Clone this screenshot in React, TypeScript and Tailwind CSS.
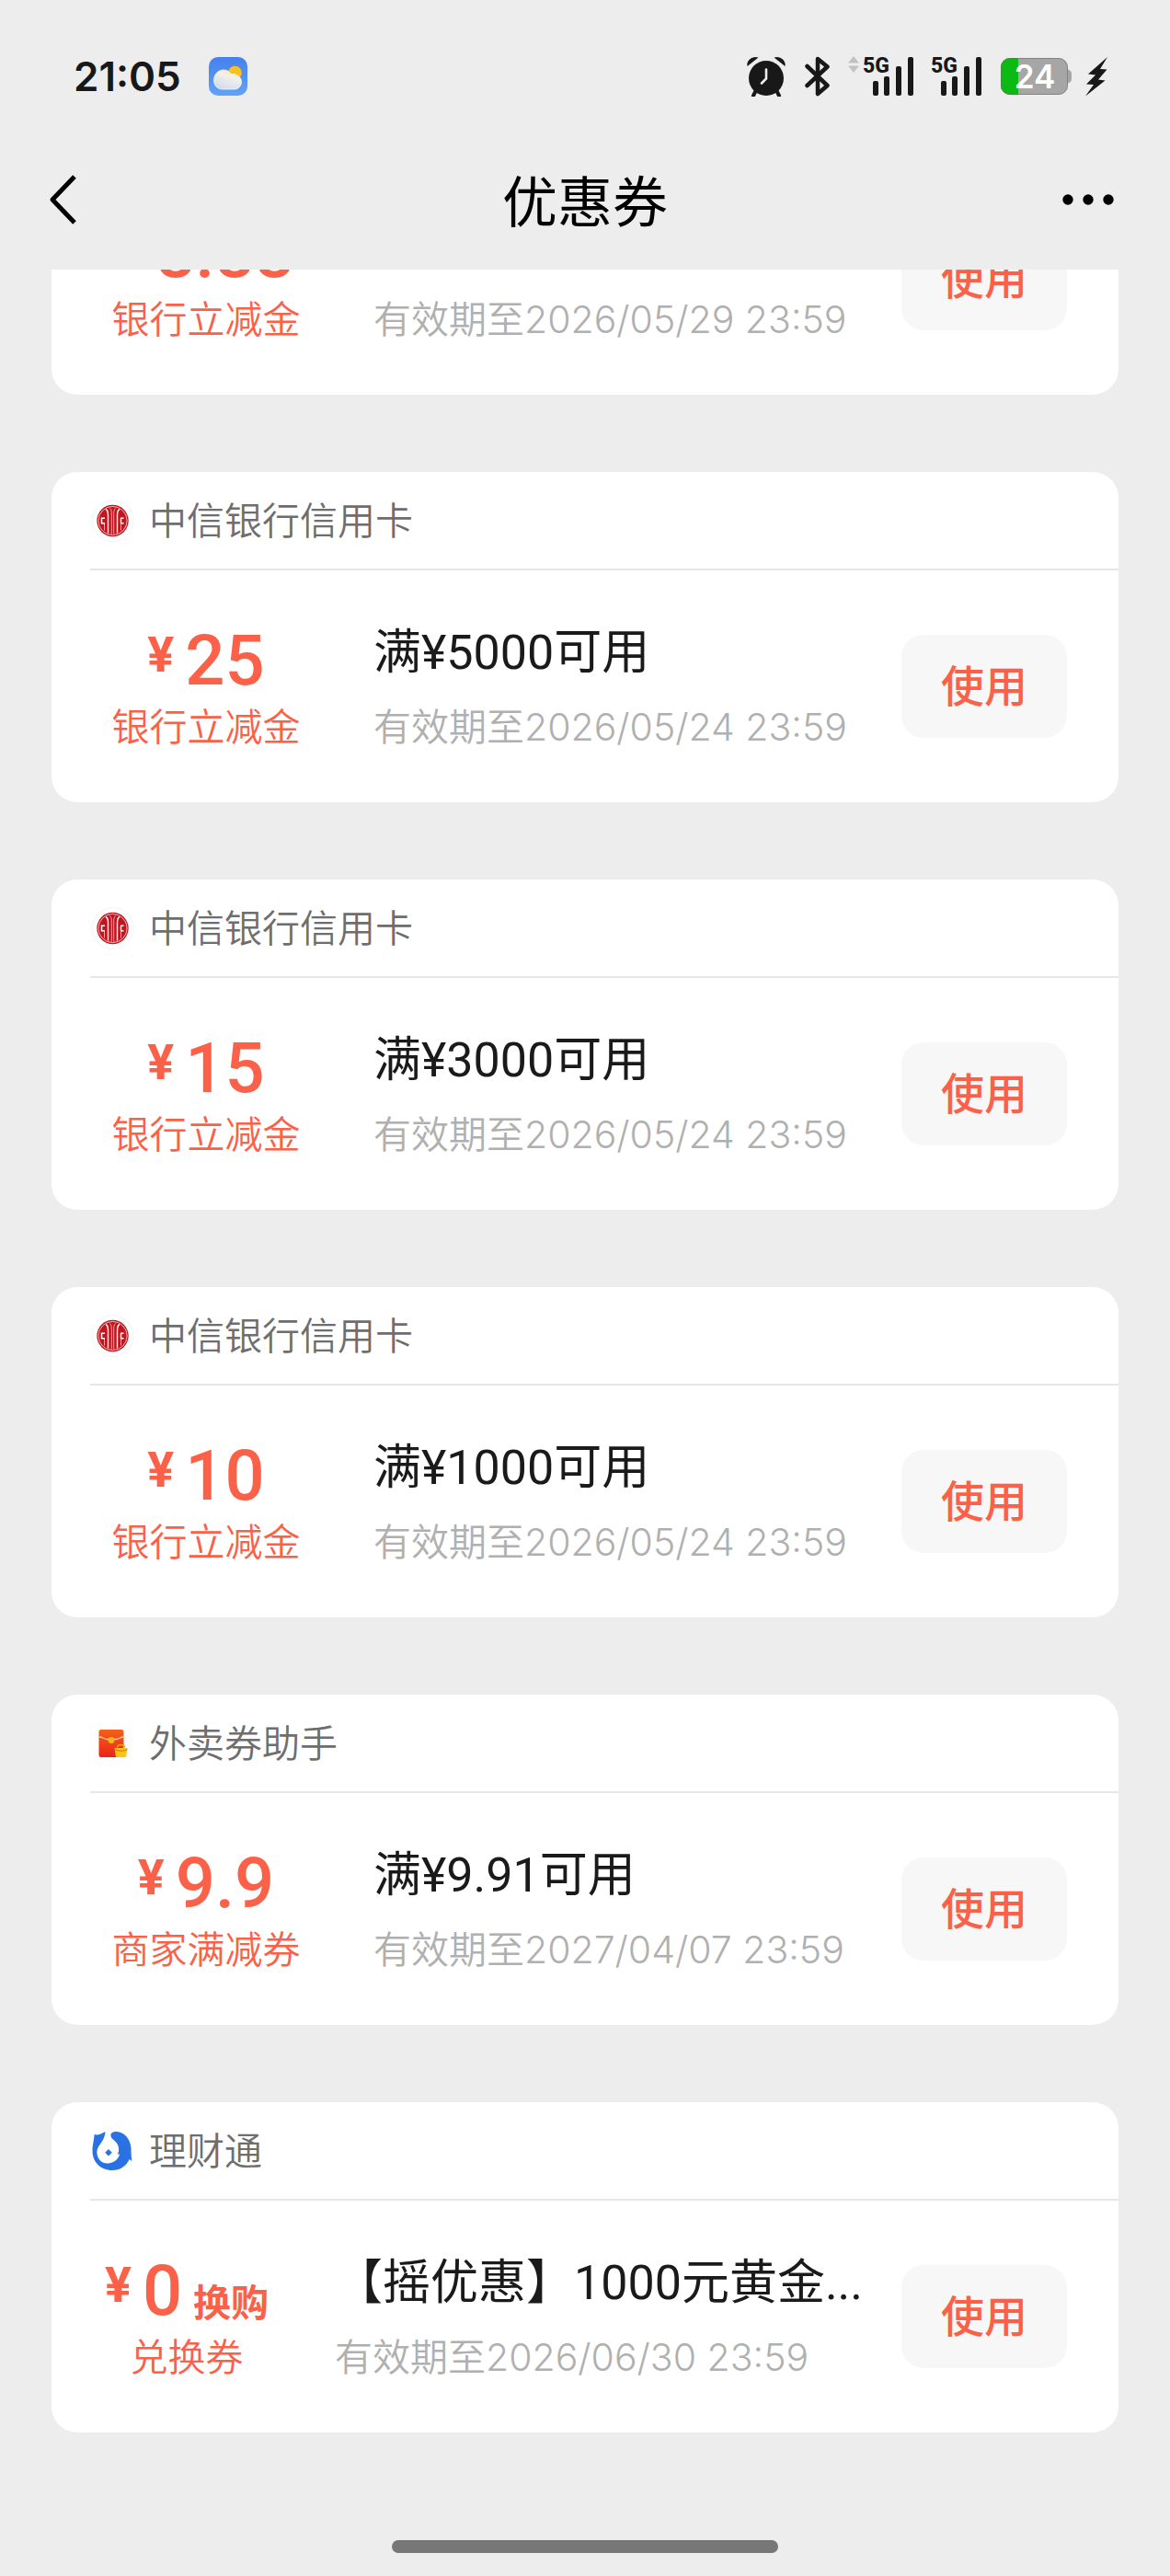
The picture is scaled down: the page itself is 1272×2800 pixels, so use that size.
import type { ReactNode } from 'react';

type Coupon = {
  id: number;
  merchant?: string;
  logo?: ReactNode;
  amount: string;
  unit?: string;
  type: string;
  title: string;
  expires: string;
};

function CiticLogo() {
  return (
    <svg viewBox="0 0 48 48" className="size-12 shrink-0" aria-hidden="true">
      <circle cx="24.5" cy="24" r="22.5" fill="#fff" stroke="#f0f5f7" strokeWidth="1" />
      <circle cx="24.5" cy="24" r="17.2" fill="#c0161f" />
      <circle cx="24.5" cy="24" r="15.6" fill="none" stroke="#fff" strokeWidth="0.7" />
      <g fill="none" stroke="#fff">
        <path d="M17 11.5C19 12.5 19.5 14.5 19.5 18V37.5" strokeWidth="1.4" />
        <path d="M32 11.5C30 12.5 29.5 14.5 29.5 18V37.5" strokeWidth="1.4" />
        <path d="M21.5 10.5C23 12 23.3 14 23.3 17V38.5M27.5 10.5C26 12 25.7 14 25.7 17V38.5" strokeWidth="0.6" />
        <path d="M16 21.2H12.5V26.8H16M33 21.2H36.5M33 26.8H36.5M33.5 21.2V26.8" strokeWidth="1.5" />
        <path d="M15.5 27V34.5M33.5 27V34.5" strokeWidth="0.7" />
      </g>
    </svg>
  );
}

function TakeawayLogo() {
  return (
    <svg viewBox="0 0 48 48" className="size-12 shrink-0" aria-hidden="true">
      <defs>
        <linearGradient id="packet" x1="0" y1="0" x2="0" y2="1">
          <stop offset="0" stopColor="#f5601c" />
          <stop offset="1" stopColor="#ea2418" />
        </linearGradient>
      </defs>
      <circle cx="24" cy="24" r="23" fill="#fffdfb" />
      <rect x="9.5" y="9" width="27" height="30" rx="2.5" fill="url(#packet)" />
      <path d="M10 17C14 17 15 19.5 19 19.5H28C32 19.5 32 17 36.5 17" fill="none" stroke="#fcc9a0" strokeWidth="1.3" />
      <circle cx="23" cy="20.5" r="3.4" fill="#fdb713" />
      <path d="M29.5 28.5C29.5 24.5 37.5 24.5 37.5 28.5" fill="none" stroke="#f2a413" strokeWidth="1.6" />
      <path d="M26.5 29H40.5L39.3 37.5Q39 39 37.5 39H29.5Q28 39 27.7 37.5Z" fill="#fdc21a" />
      <path d="M26.5 30.5Q33.5 34 40.5 30.5" fill="none" stroke="#c9780c" strokeWidth="1" />
    </svg>
  );
}

function LicaitongLogo() {
  return (
    <svg viewBox="0 0 48 48" className="size-12 shrink-0" fill="#2a71e4" aria-hidden="true">
      <path d="M4.5 6C8 7.2 12 5.5 16.5 3C16 9 14 12.5 11 16.5C8 20.5 7 23 7.5 27C8.5 34 13.5 38 19.5 37.5C27 37 31 32 32 27.5L29.5 27.5C32 25.5 31.5 19 29 15.5C26 11.5 22.5 10.5 22.5 7.5C22 4.5 24.5 3 28.5 3C38 3.5 44 12 44.5 21C44.6 26 44.5 29 45.5 35L42.5 33C39.5 40.5 32.5 45 24 45C11 45 2.5 35.5 2.5 24C2.5 16.5 4.5 12 4.5 6Z" />
      <path d="M20 22.5L23.3 25.8L20 29.1L16.7 25.8Z" stroke="#2a71e4" strokeWidth="1" strokeLinejoin="round" />
    </svg>
  );
}

const coupons: Coupon[] = [
  { id: 1, amount: '8.88', type: '银行立减金', title: '满¥8.89可用', expires: '2026/05/29 23:59' },
  { id: 2, merchant: '中信银行信用卡', logo: <CiticLogo />, amount: '25', type: '银行立减金', title: '满¥5000可用', expires: '2026/05/24 23:59' },
  { id: 3, merchant: '中信银行信用卡', logo: <CiticLogo />, amount: '15', type: '银行立减金', title: '满¥3000可用', expires: '2026/05/24 23:59' },
  { id: 4, merchant: '中信银行信用卡', logo: <CiticLogo />, amount: '10', type: '银行立减金', title: '满¥1000可用', expires: '2026/05/24 23:59' },
  { id: 5, merchant: '外卖券助手', logo: <TakeawayLogo />, amount: '9.9', type: '商家满减券', title: '满¥9.91可用', expires: '2027/04/07 23:59' },
  { id: 6, merchant: '理财通', logo: <LicaitongLogo />, amount: '0', unit: '换购', type: '兑换券', title: '【摇优惠】1000元黄金...', expires: '2026/06/30 23:59' },
];

function Signal() {
  return (
    <svg viewBox="0 0 46 44" className="h-11 w-[46px]" fill="#181818" role="img" aria-label="5G 信号">
      <text x="0" y="18" fontSize="23" fontWeight="800" fontFamily="Roboto, sans-serif">
        5G
      </text>
      <rect x="11" y="27" width="6" height="16" rx="2" />
      <rect x="23" y="22" width="6" height="21" rx="2" />
      <rect x="36" y="11" width="6" height="32" rx="2" />
      <rect x="49" y="1" width="6" height="42" rx="2" />
    </svg>
  );
}

function StatusBar() {
  return (
    <div className="flex h-[166px] items-center justify-between pl-20 pr-[68px] text-[#181818]">
      <div className="flex items-center gap-[30px]">
        <span className="text-[44px] leading-none font-semibold">21:05</span>
        <svg viewBox="0 0 42 42" className="size-[42px]" role="img" aria-label="天气">
          <defs>
            <linearGradient id="sky" x1="0" y1="0" x2="0" y2="1">
              <stop offset="0" stopColor="#4580ec" />
              <stop offset="1" stopColor="#62a2f7" />
            </linearGradient>
            <linearGradient id="cloud" x1="0.8" y1="0" x2="0.3" y2="1">
              <stop offset="0" stopColor="#fbe08a" />
              <stop offset="0.35" stopColor="#f3f1ea" />
              <stop offset="1" stopColor="#cfdced" />
            </linearGradient>
          </defs>
          <rect width="42" height="42" rx="10" fill="url(#sky)" />
          <circle cx="28.5" cy="17" r="7.3" fill="#fbc01f" />
          <path d="M15 35C9 35 5.5 30.5 5.5 25.5C5.5 19 10 14 16 14C20 14 22.5 16 24.5 18.5C30.5 18 35.5 22 35.5 27C35.5 31.5 32 35 28 35Z" fill="url(#cloud)" stroke="#f2f6fc" strokeWidth="0.8" />
        </svg>
      </div>

      <div className="flex items-center">
        <svg viewBox="0 0 44 44" className="size-11" role="img" aria-label="闹钟">
          <circle cx="22" cy="24" r="19" fill="#181818" />
          <path d="M1.5 11C0 5 7 -1 13.5 1.5Z M42.5 11C44 5 37 -1 30.5 1.5Z" fill="#181818" />
          <path d="M10.5 38L8 43M33.5 38L36 43" stroke="#181818" strokeWidth="4" strokeLinecap="round" />
          <path d="M22 14.5V24.5L17 29.5" fill="none" stroke="#ededed" strokeWidth="2.6" strokeLinecap="round" />
        </svg>
        <svg viewBox="0 0 28 44" className="ml-5 h-11 w-7" fill="none" stroke="#181818" strokeWidth="4.5" strokeLinecap="round" strokeLinejoin="round" role="img" aria-label="蓝牙">
          <path d="M2.5 11L24.5 32L14 41V3L24.5 11.5L2.5 32" />
        </svg>
        <svg viewBox="0 0 12 44" className="ml-[19px] h-11 w-3" fill="#c2c2c2" aria-hidden="true">
          <path d="M6 0L12 7.5H0ZM6 18L12 10.5H0Z" />
        </svg>
        <div className="ml-1 flex gap-7 [&>svg]:overflow-visible">
          <Signal />
          <Signal />
        </div>
        <svg viewBox="0 0 78 40" className="ml-[30px] h-10 w-[78px]" role="img" aria-label="电量 24%">
          <defs>
            <clipPath id="cell">
              <rect width="73" height="40" rx="10" />
            </clipPath>
          </defs>
          <path d="M73 12.5Q77 14 77 17V23Q77 26 73 27.5Z" fill="#a6a6a6" />
          <g clipPath="url(#cell)">
            <rect width="73" height="40" fill="#a6a6a6" />
            <rect width="19" height="40" fill="#0bba12" />
          </g>
          <rect x="0.5" y="0.5" width="72" height="39" rx="9.5" fill="none" stroke="#6b6b6b" strokeOpacity="0.6" />
          <text x="37" y="33" fontSize="35" fontWeight="600" fill="#fff" textAnchor="middle">
            24
          </text>
        </svg>
        <svg viewBox="0 0 24 44" className="ml-[14px] h-11 w-6" fill="#181818" role="img" aria-label="充电中">
          <path d="M24 1L3 19.5L11 20.5L1 30.5L9 31L0 43.5L21.5 26.5L14 25.5L23.5 14.5L16 14Z" />
        </svg>
      </div>
    </div>
  );
}

function NavBar() {
  return (
    <header className="grid h-[127px] grid-cols-[1fr_auto_1fr] items-start px-[52px]">
      <button type="button" aria-label="返回" className="mt-6 justify-self-start">
        <svg viewBox="0 0 32 54" className="h-[54px] w-8" fill="none" stroke="#000" strokeWidth="5" strokeLinejoin="round" aria-hidden="true">
          <path d="M29 2L5 27L29 52" />
        </svg>
      </button>
      <h1 className="pt-[18px] text-[60px] leading-[72px] text-black">优惠券</h1>
      <button type="button" aria-label="更多" className="mt-6 justify-self-end">
        <svg viewBox="0 0 66 54" className="h-[54px] w-[66px]" aria-hidden="true">
          <circle cx="7" cy="27" r="5.7" />
          <circle cx="29" cy="27" r="5.7" />
          <circle cx="51" cy="27" r="5.7" />
        </svg>
      </button>
    </header>
  );
}

function CouponCard({ coupon }: { coupon: Coupon }) {
  return (
    <li className="rounded-[28px] bg-white pl-[42px]">
      {coupon.merchant && (
        <div className="flex h-[107px] items-center gap-4 border-b-2 border-[#e6e6e6]">
          {coupon.logo}
          <span className="text-[41px] leading-[56px] font-[350] text-[#6e6e6e]">{coupon.merchant}</span>
        </div>
      )}
      <div className="flex h-[252px] items-center pr-14">
        <div className={`flex shrink-0 flex-col items-center pt-1 text-[#fa6148] ${coupon.unit ? 'w-[210px]' : 'w-[252px]'}`}>
          <div className="flex items-start font-[Roboto,'Noto_Sans_CJK_SC',sans-serif] font-medium">
            <span className="mt-1 mr-3 text-[54px] leading-[60px] font-bold">¥</span>
            <span className="text-[76px] leading-[80px]">{coupon.amount}</span>
            {coupon.unit && <span className="ml-3 self-end text-[41px] leading-[52px] font-bold">{coupon.unit}</span>}
          </div>
          <span className="mt-1 text-[41px] leading-[56px] font-[350]">{coupon.type}</span>
        </div>
        <div className="ml-14 min-w-0 flex-1">
          <div className="truncate font-[Roboto,'Noto_Sans_CJK_SC',sans-serif] text-[52px] leading-[72px] text-[#1a1a1a]">
            {coupon.title}
          </div>
          <div className="mt-4 text-[41px] leading-[56px] font-[350] whitespace-nowrap text-[#b0b0b0]">有效期至{coupon.expires}</div>
        </div>
        <button type="button" className="h-28 w-[180px] shrink-0 rounded-3xl bg-[#f7f7f7] text-[47px] font-medium text-[#fa6148]">
          使用
        </button>
      </div>
    </li>
  );
}

function App() {
  return (
    <div className="flex min-h-screen flex-col bg-[#ededed] font-[Inter,'Noto_Sans_CJK_SC',sans-serif]" lang="zh-CN">
      <StatusBar />
      <NavBar />

      {/* Coupon list, scrolled part way under the nav bar */}
      <main className="flex-1 overflow-hidden px-14">
        <ul className="-mt-[116px] flex flex-col gap-[84px]">
          {coupons.map((coupon) => (
            <CouponCard key={coupon.id} coupon={coupon} />
          ))}
        </ul>
      </main>

      {/* Home indicator */}
      <div className="mx-auto mb-[25px] h-[14px] w-[420px] rounded-full bg-[#777]" />
    </div>
  );
}

export default App;
